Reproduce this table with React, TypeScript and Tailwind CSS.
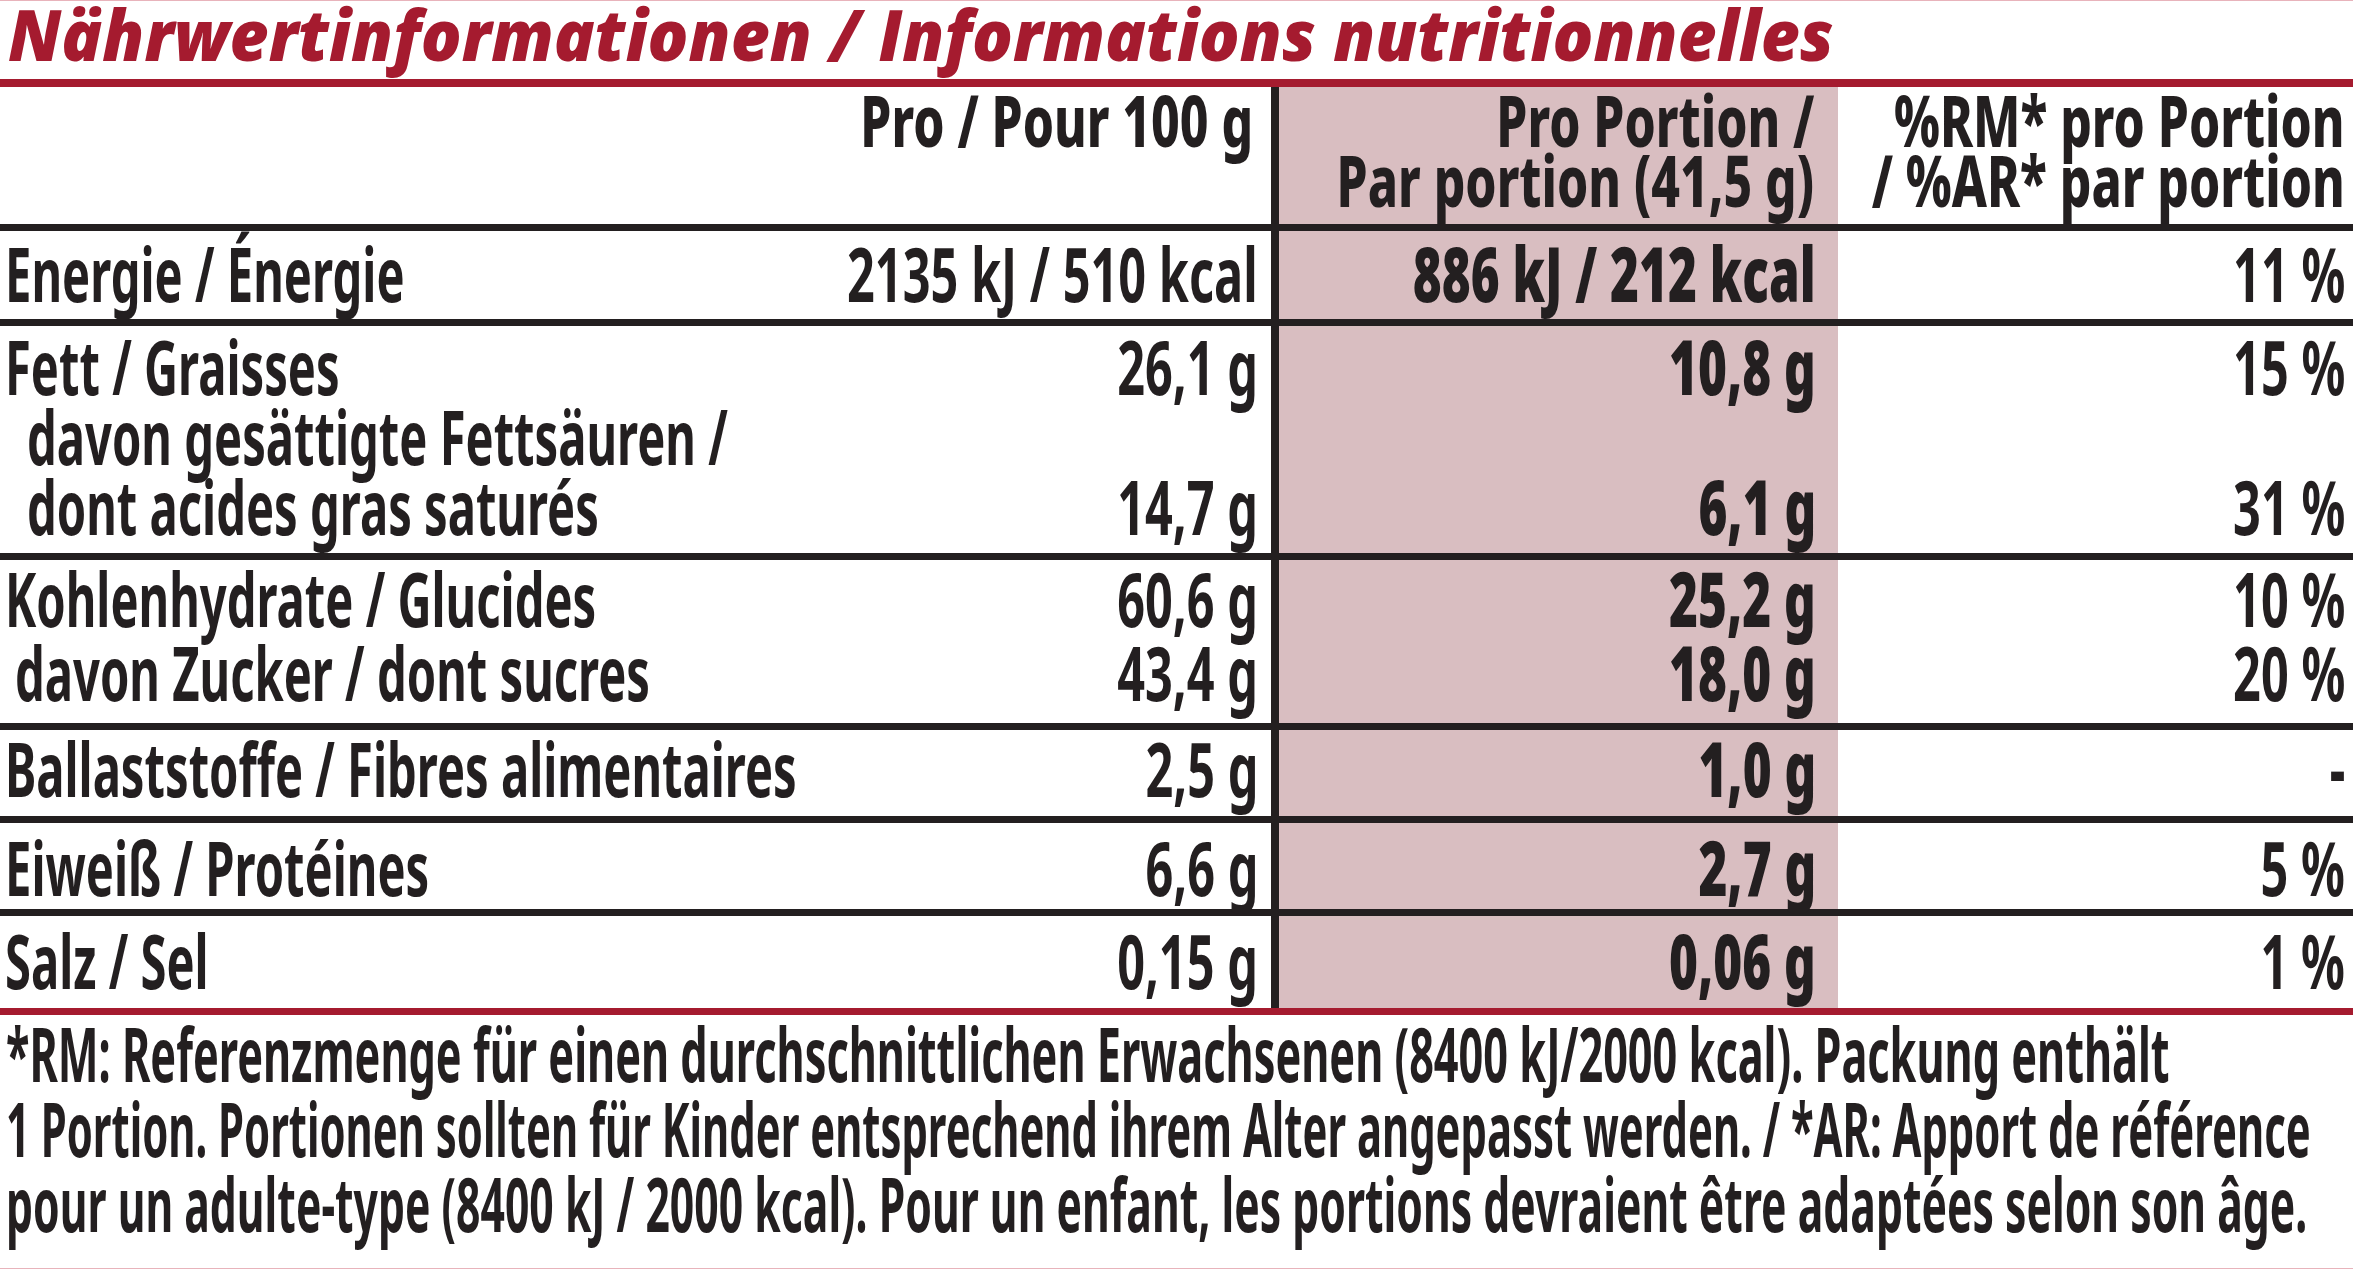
import React from "react";

type Line = {
  label: string;
  indent?: string;
  per100?: string;
  portion?: string;
  ri?: string;
};

type Row = {
  height: string;
  pad: string;
  leading: string;
  last?: boolean;
  lines: Line[];
};

// heights include the 7px rule under each row
const rows: Row[] = [
  {
    height: "h-[95px]",
    pad: "pt-[7px]",
    leading: "leading-[70px]",
    lines: [
      { label: "Energie / Énergie", per100: "2135 kJ / 510 kcal", portion: "886 kJ / 212 kcal", ri: "11 %" },
    ],
  },
  {
    height: "h-[234px]",
    pad: "pt-[5px]",
    leading: "leading-[70px]",
    lines: [
      { label: "Fett / Graisses", per100: "26,1 g", portion: "10,8 g", ri: "15 %" },
      { label: "davon gesättigte Fettsäuren /", indent: "pl-[22px]" },
      { label: "dont acides gras saturés", indent: "pl-[22px]", per100: "14,7 g", portion: "6,1 g", ri: "31 %" },
    ],
  },
  {
    height: "h-[170px]",
    pad: "pt-[1px]",
    leading: "leading-[74px]",
    lines: [
      { label: "Kohlenhydrate / Glucides", per100: "60,6 g", portion: "25,2 g", ri: "10 %" },
      { label: "davon Zucker / dont sucres", indent: "pl-[10px]", per100: "43,4 g", portion: "18,0 g", ri: "20 %" },
    ],
  },
  {
    height: "h-[93px]",
    pad: "pt-[3px]",
    leading: "leading-[70px]",
    lines: [{ label: "Ballaststoffe / Fibres alimentaires", per100: "2,5 g", portion: "1,0 g", ri: "-" }],
  },
  {
    height: "h-[93px]",
    pad: "pt-[9px]",
    leading: "leading-[70px]",
    lines: [{ label: "Eiweiß / Protéines", per100: "6,6 g", portion: "2,7 g", ri: "5 %" }],
  },
  {
    height: "h-[99px]",
    pad: "pt-[9px]",
    leading: "leading-[70px]",
    last: true,
    lines: [{ label: "Salz / Sel", per100: "0,15 g", portion: "0,06 g", ri: "1 %" }],
  },
];

// the print face is far narrower than any installed font, so text is squeezed sideways
const squeeze = {
  left: "inline-block whitespace-nowrap origin-left scale-x-[0.62]",
  right: "inline-block whitespace-nowrap origin-right scale-x-[0.64]",
  strong: "inline-block whitespace-nowrap origin-right scale-x-[0.65]",
  head: "inline-block whitespace-nowrap origin-right scale-x-[0.7]",
};

// footnote lines break where the printed label breaks them
const footnote = [
  {
    text: "*RM: Referenzmenge für einen durchschnittlichen Erwachsenen (8400 kJ/2000 kcal). Packung enthält",
    fit: "inline-block whitespace-nowrap origin-left scale-x-[0.569]",
  },
  {
    text: "1 Portion. Portionen sollten für Kinder entsprechend ihrem Alter angepasst werden. / *AR: Apport de référence",
    fit: "inline-block whitespace-nowrap origin-left scale-x-[0.55]",
  },
  {
    text: "pour un adulte-type (8400 kJ / 2000 kcal). Pour un enfant, les portions devraient être adaptées selon son âge.",
    fit: "inline-block whitespace-nowrap origin-left scale-x-[0.562]",
  },
];

function NutritionRow({ row }: { row: Row }) {
  return (
    <div
      className={`flex ${row.height} ${
        row.last ? "border-b-[7px] border-[#a51b2f]" : "border-b-[7px] border-[#231f20]"
      }`}
    >
      <div className={`w-[1279px] shrink-0 border-r-[8px] border-[#231f20] pl-[5px] pr-[13px] ${row.pad}`}>
        {row.lines.map((line, i) => (
          <div key={i} className={`flex justify-between ${row.leading}`}>
            <span className={`min-w-0 ${line.indent ?? ""}`}>
              <span className={squeeze.left}>{line.label}</span>
            </span>
            <span className="shrink-0">
              <span className={squeeze.right}>{line.per100 ?? "\u00a0"}</span>
            </span>
          </div>
        ))}
      </div>
      <div className={`w-[559px] shrink-0 bg-[#d9bec1] pr-[22px] font-black ${row.pad}`}>
        {row.lines.map((line, i) => (
          <div key={i} className={`flex justify-end ${row.leading}`}>
            <span className={squeeze.strong}>{line.portion ?? "\u00a0"}</span>
          </div>
        ))}
      </div>
      <div className={`min-w-0 flex-1 pr-[8px] ${row.pad}`}>
        {row.lines.map((line, i) => (
          <div key={i} className={`flex justify-end ${row.leading}`}>
            <span className={squeeze.right}>{line.ri ?? "\u00a0"}</span>
          </div>
        ))}
      </div>
    </div>
  );
}

export default function App() {
  return (
    <div className="h-[1269px] w-full overflow-hidden bg-white text-[#231f20] border-t border-b border-[#e8b3bb] font-['Noto_Sans','Open_Sans',sans-serif] font-bold">
      {/* title */}
      <div className="h-[86px] border-b-[8px] border-[#a51b2f] pl-[8px]">
        <h1 className="font-['Open_Sans',sans-serif] text-[70px] leading-[66px] font-extrabold italic text-[#a51b2f]">
          <span className="inline-block whitespace-nowrap origin-left scale-x-[0.965]">
            Nährwertinformationen / Informations nutritionnelles
          </span>
        </h1>
      </div>

      {/* column headings */}
      <div className="flex h-[144px] border-b-[7px] border-[#231f20] text-[71px] leading-[60px] font-extrabold">
        <div className="flex w-[1279px] shrink-0 justify-end border-r-[8px] border-[#231f20] pr-[18px] pt-[3px]">
          <span className={squeeze.head}>Pro / Pour 100 g</span>
        </div>
        <div className="w-[559px] shrink-0 bg-[#d9bec1] pr-[24px] pt-[3px]">
          <div className="flex justify-end">
            <span className={squeeze.head}>Pro Portion /</span>
          </div>
          <div className="flex justify-end">
            <span className={squeeze.head}>Par portion (41,5 g)</span>
          </div>
        </div>
        <div className="min-w-0 flex-1 pr-[8px] pt-[3px]">
          <div className="flex justify-end">
            <span className={squeeze.head}>%RM* pro Portion</span>
          </div>
          <div className="flex justify-end">
            <span className={squeeze.head}>/ %AR* par portion</span>
          </div>
        </div>
      </div>

      <div className="text-[76px]">
        {rows.map((row, i) => (
          <NutritionRow key={i} row={row} />
        ))}
      </div>

      {/* footnote */}
      <div className="pl-[6px] text-[76px] leading-[75px]">
        {footnote.map((line, i) => (
          <div key={i}>
            <span className={line.fit}>{line.text}</span>
          </div>
        ))}
      </div>
    </div>
  );
}
